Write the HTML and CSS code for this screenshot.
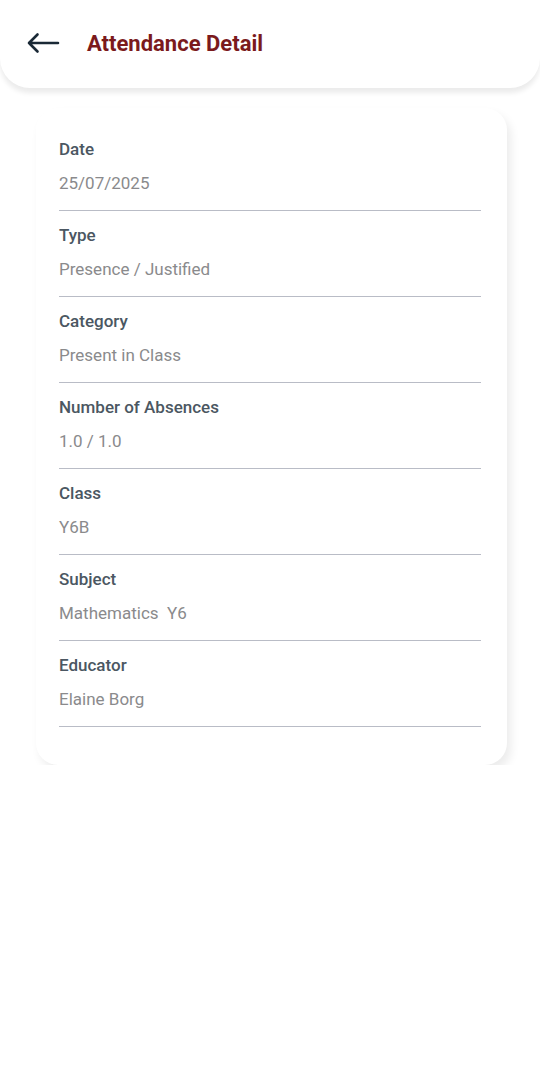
FILE: index.html
```html
<!DOCTYPE html>
<html lang="en">
<head>
    <meta charset="UTF-8">
    <meta name="viewport" content="width=device-width, initial-scale=1.0">
    <title>Attendance Detail</title>
    <link rel="stylesheet" href="styles.css">
</head>
<body>
    <header class="topbar">
        <button class="back" type="button" aria-label="Back">
            <svg width="34" height="22" viewBox="0 0 34 22">
                <path d="M32 11H3M11.5 2.5L3 11l8.5 8.5" fill="none" stroke="#1a2936" stroke-width="2.6" stroke-linecap="round" stroke-linejoin="round"/>
            </svg>
        </button>
        <h1>Attendance Detail</h1>
    </header>

    <main class="card">
        <div class="field">
            <div class="label">Date</div>
            <div class="value">25/07/2025</div>
        </div>
        <div class="field">
            <div class="label">Type</div>
            <div class="value">Presence / Justified</div>
        </div>
        <div class="field">
            <div class="label">Category</div>
            <div class="value">Present in Class</div>
        </div>
        <div class="field">
            <div class="label">Number of Absences</div>
            <div class="value">1.0 / 1.0</div>
        </div>
        <div class="field">
            <div class="label">Class</div>
            <div class="value">Y6B</div>
        </div>
        <div class="field">
            <div class="label">Subject</div>
            <div class="value">Mathematics&nbsp; Y6</div>
        </div>
        <div class="field">
            <div class="label">Educator</div>
            <div class="value">Elaine Borg</div>
        </div>
    </main>
</body>
</html>
```

FILE: styles.css
```css
body {
    margin: 0;
    background: #fff;
    font-family: Roboto, "Liberation Sans", Arial, sans-serif;
}
.topbar {
    position: relative;
    z-index: 2;
    height: 88px;
    display: flex;
    align-items: center;
    padding: 0 0 2px 26px;
    box-sizing: border-box;
    background: #fff;
    border-radius: 0 0 30px 30px;
    box-shadow: 0 5px 5px rgba(0, 0, 0, 0.08);
}
.back {
    display: flex;
    padding: 0;
    border: none;
    background: none;
    cursor: pointer;
}
.topbar h1 {
    margin: 0 0 0 27px;
    font-size: 22px;
    font-weight: 700;
    color: #7b1a1c;
}
.card {
    margin: 20px 33px 0 36px;
    padding: 17px 26px 38px 23px;
    background: #fff;
    border-radius: 22px;
    box-shadow: 4px 6px 10px rgba(0, 0, 0, 0.08);
}
.field {
    padding: 14px 0 17px;
    border-bottom: 1.2px solid #b9bcc6;
}
.label {
    font-size: 17px;
    line-height: 20px;
    font-weight: 500;
    color: #4b5762;
}
.value {
    margin-top: 14px;
    font-size: 17px;
    line-height: 20px;
    color: #8a8a8c;
}
```
